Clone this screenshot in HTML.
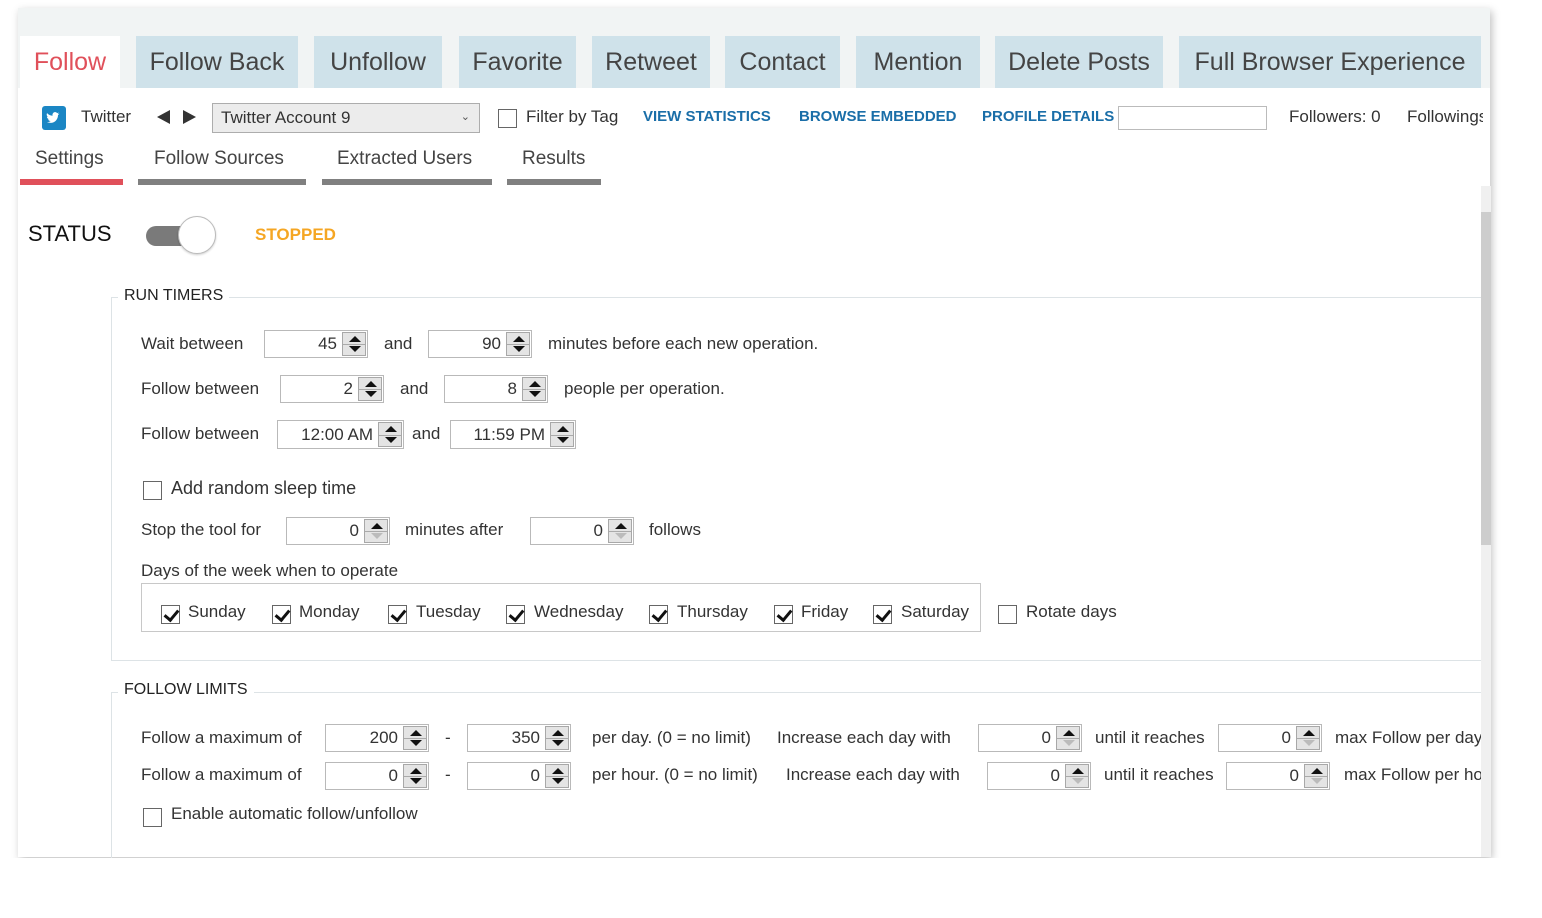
<!DOCTYPE html>
<html><head><meta charset="utf-8"><style>
*{margin:0;padding:0;box-sizing:border-box}
body{width:1542px;height:918px;background:#fff;position:relative;overflow:hidden;font-family:"Liberation Sans",sans-serif;color:#333}
.a{position:absolute;white-space:nowrap}
.win{position:absolute;left:18px;top:8px;width:1472px;height:849px;background:#fff;box-shadow:2px 3px 8px rgba(0,0,0,.25)}
.tabbar{position:absolute;left:18px;top:8px;width:1472px;height:80px;background:#f1f4f4}
.tab{position:absolute;top:36px;height:52px;background:#cfe2ea;color:#444;font-size:25px;display:flex;align-items:center;justify-content:center;white-space:nowrap}
.t{font-size:17px;color:#333;line-height:20px}
.sp{position:absolute;border:1px solid #b9b9b9;background:#fff}
.sp .v{position:absolute;right:30px;top:50%;transform:translateY(-50%);font-size:17px;color:#333}
.sp .b{position:absolute;right:1px;top:1px;bottom:1px;width:24px;background:#e4e4e4;border:1px solid #a8a8a8}
.sp .b:before{content:"";position:absolute;left:6px;top:3px;border-left:6px solid transparent;border-right:6px solid transparent;border-bottom:6px solid #111}
.sp .b:after{content:"";position:absolute;left:6px;bottom:3px;border-left:6px solid transparent;border-right:6px solid transparent;border-top:6px solid #111}
.sp .b.dd:after{border-top-color:#bbb}
.sp .b i{position:absolute;left:0;right:0;top:50%;border-top:1px solid #aaa}
.cb{position:absolute;width:19px;height:19px;border:1px solid #666;background:#fff}
.cb.k:after{content:"";position:absolute;left:5px;top:1px;width:6px;height:11px;border-right:3px solid #111;border-bottom:3px solid #111;transform:rotate(40deg)}
.lnk{color:#1a6ea8;font-weight:bold;font-size:15px}
</style></head><body>
<div class="win"></div>
<div class="tabbar"></div>
<div class="tab" style="left:20px;width:100px;background:#fff;color:#e0505a">Follow</div>
<div class="tab" style="left:136px;width:162px">Follow Back</div>
<div class="tab" style="left:314px;width:128px">Unfollow</div>
<div class="tab" style="left:459px;width:117px">Favorite</div>
<div class="tab" style="left:592px;width:118px">Retweet</div>
<div class="tab" style="left:725px;width:115px">Contact</div>
<div class="tab" style="left:856px;width:124px">Mention</div>
<div class="tab" style="left:995px;width:168px">Delete Posts</div>
<div class="tab" style="left:1179px;width:302px">Full Browser Experience</div>

<div class="a" style="left:42px;top:106px;width:24px;height:24px;background:#1b86c4;border-radius:3px"><svg width="24" height="24" viewBox="0 0 24 24"><path d="M5 16c3 1.5 7 1 9-1.5 1.5-1.8 2-3.8 2-5.5l1.5-1.3-1.8.3 1.2-1.5-1.8.6c-1-1.2-3-1.3-4 0-.7.8-.7 1.8-.5 2.6-2.3 0-4-1-5.5-2.6-.8 1.5-.3 3 1 3.8l-1.2-.2c.1 1.3 1 2.2 2.3 2.5l-1.2.1c.4 1 1.4 1.7 2.6 1.7C7.7 15.8 6.4 16.2 5 16z" fill="#fff"/></svg></div>
<div class="a t" style="left:81px;top:107px">Twitter</div>
<div class="a" style="left:157px;top:110px;border-top:7px solid transparent;border-bottom:7px solid transparent;border-right:13px solid #333"></div>
<div class="a" style="left:183px;top:110px;border-top:7px solid transparent;border-bottom:7px solid transparent;border-left:13px solid #333"></div>
<div class="a" style="left:212px;top:103px;width:268px;height:30px;border:1px solid #adadad;background:#ececec"><span class="t" style="position:absolute;left:8px;top:4px">Twitter Account 9</span><span style="position:absolute;right:9px;top:6px;font-size:11px;color:#555">&#8964;</span></div>
<div class="cb" style="left:498px;top:109px"></div>
<div class="a t" style="left:526px;top:107px">Filter by Tag</div>
<div class="a lnk" style="left:643px;top:108px">VIEW STATISTICS</div>
<div class="a lnk" style="left:799px;top:108px">BROWSE EMBEDDED</div>
<div class="a lnk" style="left:982px;top:108px">PROFILE DETAILS</div>
<div class="a" style="left:1118px;top:106px;width:149px;height:24px;border:1px solid #bbb;background:#fff"></div>
<div class="a t" style="left:1289px;top:107px">Followers: 0</div>
<div class="a" style="left:1407px;top:107px;width:76px;overflow:hidden"><span class="t">Followings</span></div>

<div class="a t" style="left:35px;top:149px;font-size:19px;color:#444">Settings</div>
<div class="a t" style="left:154px;top:149px;font-size:19px;color:#444">Follow Sources</div>
<div class="a t" style="left:337px;top:149px;font-size:19px;color:#444">Extracted Users</div>
<div class="a t" style="left:522px;top:149px;font-size:19px;color:#444">Results</div>
<div class="a" style="left:20px;top:179px;width:103px;height:6px;background:#e0505a"></div>
<div class="a" style="left:138px;top:179px;width:168px;height:6px;background:#808080"></div>
<div class="a" style="left:322px;top:179px;width:170px;height:6px;background:#808080"></div>
<div class="a" style="left:507px;top:179px;width:94px;height:6px;background:#808080"></div>

<div class="a" style="left:1481px;top:186px;width:10px;height:671px;background:#f0f0f0"></div>
<div class="a" style="left:1481px;top:212px;width:10px;height:333px;background:#cdcdcd"></div>

<div class="a" style="left:28px;top:221px;font-size:22px;color:#111">STATUS</div>
<div class="a" style="left:146px;top:226px;width:50px;height:20px;border-radius:10px;background:#7a7a7a"></div>
<div class="a" style="left:178px;top:216px;width:38px;height:38px;border-radius:50%;background:#fff;border:1px solid #bbb;box-shadow:0 1px 2px rgba(0,0,0,.2)"></div>
<div class="a" style="left:255px;top:225px;font-size:17px;font-weight:bold;color:#f5a623">STOPPED</div>

<div class="a" style="left:111px;top:297px;width:1370px;height:364px;border:1px solid #dde3e6;border-right:none"></div>
<div class="a t" style="left:118px;top:286px;background:#fff;padding:0 6px;font-size:16px;color:#222">RUN TIMERS</div>

<div class="a t" style="left:141px;top:334px">Wait between</div>
<div class="sp" style="left:264px;top:330px;width:104px;height:28px"><span class="v">45</span><div class="b"><i></i></div></div>
<div class="a t" style="left:384px;top:334px">and</div>
<div class="sp" style="left:428px;top:330px;width:104px;height:28px"><span class="v">90</span><div class="b"><i></i></div></div>
<div class="a t" style="left:548px;top:334px">minutes before each new operation.</div>

<div class="a t" style="left:141px;top:379px">Follow between</div>
<div class="sp" style="left:280px;top:375px;width:104px;height:28px"><span class="v">2</span><div class="b"><i></i></div></div>
<div class="a t" style="left:400px;top:379px">and</div>
<div class="sp" style="left:444px;top:375px;width:104px;height:28px"><span class="v">8</span><div class="b"><i></i></div></div>
<div class="a t" style="left:564px;top:379px">people per operation.</div>

<div class="a t" style="left:141px;top:424px">Follow between</div>
<div class="sp" style="left:277px;top:420px;width:127px;height:29px"><span class="v">12:00 AM</span><div class="b"><i></i></div></div>
<div class="a t" style="left:412px;top:424px">and</div>
<div class="sp" style="left:450px;top:420px;width:126px;height:29px"><span class="v">11:59 PM</span><div class="b"><i></i></div></div>

<div class="cb" style="left:143px;top:481px"></div>
<div class="a t" style="left:171px;top:478px;font-size:18px">Add random sleep time</div>

<div class="a t" style="left:141px;top:520px">Stop the tool for</div>
<div class="sp" style="left:286px;top:517px;width:104px;height:28px"><span class="v">0</span><div class="b dd"><i></i></div></div>
<div class="a t" style="left:405px;top:520px">minutes after</div>
<div class="sp" style="left:530px;top:517px;width:104px;height:28px"><span class="v">0</span><div class="b dd"><i></i></div></div>
<div class="a t" style="left:649px;top:520px">follows</div>

<div class="a t" style="left:141px;top:561px">Days of the week when to operate</div>
<div class="a" style="left:141px;top:583px;width:840px;height:49px;border:1px solid #c8c8c8"></div>
<div class="cb k" style="left:161px;top:605px"></div><div class="a t" style="left:188px;top:602px">Sunday</div>
<div class="cb k" style="left:272px;top:605px"></div><div class="a t" style="left:299px;top:602px">Monday</div>
<div class="cb k" style="left:388px;top:605px"></div><div class="a t" style="left:416px;top:602px">Tuesday</div>
<div class="cb k" style="left:506px;top:605px"></div><div class="a t" style="left:534px;top:602px">Wednesday</div>
<div class="cb k" style="left:649px;top:605px"></div><div class="a t" style="left:677px;top:602px">Thursday</div>
<div class="cb k" style="left:774px;top:605px"></div><div class="a t" style="left:801px;top:602px">Friday</div>
<div class="cb k" style="left:873px;top:605px"></div><div class="a t" style="left:901px;top:602px">Saturday</div>
<div class="cb" style="left:998px;top:605px"></div><div class="a t" style="left:1026px;top:602px">Rotate days</div>

<div class="a" style="left:111px;top:692px;width:1370px;height:170px;border-top:1px solid #dde3e6;border-left:1px solid #dde3e6"></div>
<div class="a t" style="left:118px;top:680px;background:#fff;padding:0 6px;font-size:16px;color:#222">FOLLOW LIMITS</div>

<div class="a t" style="left:141px;top:728px">Follow a maximum of</div>
<div class="sp" style="left:325px;top:724px;width:104px;height:28px"><span class="v">200</span><div class="b"><i></i></div></div>
<div class="a t" style="left:445px;top:728px">-</div>
<div class="sp" style="left:467px;top:724px;width:104px;height:28px"><span class="v">350</span><div class="b"><i></i></div></div>
<div class="a t" style="left:592px;top:728px">per day. (0 = no limit)</div>
<div class="a t" style="left:777px;top:728px">Increase each day with</div>
<div class="sp" style="left:978px;top:724px;width:104px;height:28px"><span class="v">0</span><div class="b dd"><i></i></div></div>
<div class="a t" style="left:1095px;top:728px">until it reaches</div>
<div class="sp" style="left:1218px;top:724px;width:104px;height:28px"><span class="v">0</span><div class="b dd"><i></i></div></div>
<div class="a" style="left:1335px;top:728px;width:146px;overflow:hidden"><span class="t">max Follow per day</span></div>

<div class="a t" style="left:141px;top:765px">Follow a maximum of</div>
<div class="sp" style="left:325px;top:762px;width:104px;height:28px"><span class="v">0</span><div class="b"><i></i></div></div>
<div class="a t" style="left:445px;top:765px">-</div>
<div class="sp" style="left:467px;top:762px;width:104px;height:28px"><span class="v">0</span><div class="b"><i></i></div></div>
<div class="a t" style="left:592px;top:765px">per hour. (0 = no limit)</div>
<div class="a t" style="left:786px;top:765px">Increase each day with</div>
<div class="sp" style="left:987px;top:762px;width:104px;height:28px"><span class="v">0</span><div class="b dd"><i></i></div></div>
<div class="a t" style="left:1104px;top:765px">until it reaches</div>
<div class="sp" style="left:1226px;top:762px;width:104px;height:28px"><span class="v">0</span><div class="b dd"><i></i></div></div>
<div class="a" style="left:1344px;top:765px;width:137px;overflow:hidden"><span class="t">max Follow per hour</span></div>

<div class="cb" style="left:143px;top:808px"></div>
<div class="a t" style="left:171px;top:804px">Enable automatic follow/unfollow</div>

<div class="a" style="left:0;top:858px;width:1542px;height:60px;background:#fff"></div>
</body></html>
